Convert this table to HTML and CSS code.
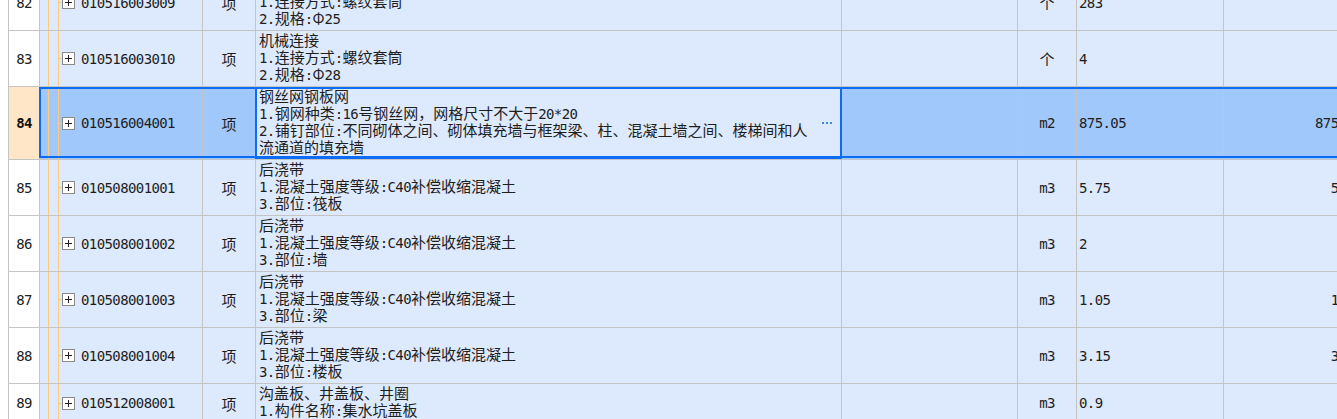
FILE: index.html
```html
<!DOCTYPE html>
<html lang="zh-CN">
<head>
<meta charset="utf-8">
<title>清单</title>
<link rel="stylesheet" href="styles.css">
</head>
<body>
<div class="sheet">
  <div class="grid">

    <div class="row">
      <div class="c num">82</div>
      <div class="c code"><span class="tick"></span><svg class="pb" width="13" height="13" viewBox="0 0 13 13"><rect x="0.5" y="0.5" width="12" height="12" fill="#fff" stroke="#8a8a8a"/><path d="M3 6.5H10M6.5 3V10" stroke="#222" fill="none"/></svg><span class="mono">010516003009</span></div>
      <div class="c unitx">项</div>
      <div class="c desc"><div class="ln">机械连接</div><div class="ln"><span class="n">1.</span>连接方式<span class="n">:</span>螺纹套筒</div><div class="ln"><span class="n">2.</span>规格<span class="n">:</span>Φ<span class="n">25</span></div></div>
      <div class="c blank"></div>
      <div class="c unit">个</div>
      <div class="c qty mono">283</div>
      <div class="c tot mono">283</div>
    </div>

    <div class="row">
      <div class="c num">83</div>
      <div class="c code"><span class="tick"></span><svg class="pb" width="13" height="13" viewBox="0 0 13 13"><rect x="0.5" y="0.5" width="12" height="12" fill="#fff" stroke="#8a8a8a"/><path d="M3 6.5H10M6.5 3V10" stroke="#222" fill="none"/></svg><span class="mono">010516003010</span></div>
      <div class="c unitx">项</div>
      <div class="c desc"><div class="ln">机械连接</div><div class="ln"><span class="n">1.</span>连接方式<span class="n">:</span>螺纹套筒</div><div class="ln"><span class="n">2.</span>规格<span class="n">:</span>Φ<span class="n">28</span></div></div>
      <div class="c blank"></div>
      <div class="c unit">个</div>
      <div class="c qty mono">4</div>
      <div class="c tot mono">4</div>
    </div>

    <div class="row sel">
      <div class="c num">84</div>
      <div class="c code"><span class="tick"></span><svg class="pb" width="13" height="13" viewBox="0 0 13 13"><rect x="0.5" y="0.5" width="12" height="12" fill="#fff" stroke="#8a8a8a"/><path d="M3 6.5H10M6.5 3V10" stroke="#222" fill="none"/></svg><span class="mono">010516004001</span></div>
      <div class="c unitx">项</div>
      <div class="c desc edit"><div class="ln">钢丝网钢板网</div><div class="ln"><span class="n">1.</span>钢网种类<span class="n">:16</span>号钢丝网，网格尺寸不大于<span class="n">20*20</span></div><div class="ln"><span class="n">2.</span>铺钉部位<span class="n">:</span>不同砌体之间、砌体填充墙与框架梁、柱、混凝土墙之间、楼梯间和人</div><div class="ln">流通道的填充墙</div><span class="more"><i></i><i></i><i></i></span></div>
      <div class="c blank"></div>
      <div class="c unit"><span class="mono">m2</span></div>
      <div class="c qty mono">875.05</div>
      <div class="c tot mono">875.05</div>
    </div>

    <div class="row">
      <div class="c num">85</div>
      <div class="c code"><span class="tick"></span><svg class="pb" width="13" height="13" viewBox="0 0 13 13"><rect x="0.5" y="0.5" width="12" height="12" fill="#fff" stroke="#8a8a8a"/><path d="M3 6.5H10M6.5 3V10" stroke="#222" fill="none"/></svg><span class="mono">010508001001</span></div>
      <div class="c unitx">项</div>
      <div class="c desc"><div class="ln">后浇带</div><div class="ln"><span class="n">1.</span>混凝土强度等级<span class="n">:C40</span>补偿收缩混凝土</div><div class="ln"><span class="n">3.</span>部位<span class="n">:</span>筏板</div></div>
      <div class="c blank"></div>
      <div class="c unit"><span class="mono">m3</span></div>
      <div class="c qty mono">5.75</div>
      <div class="c tot mono">5.75</div>
    </div>

    <div class="row">
      <div class="c num">86</div>
      <div class="c code"><span class="tick"></span><svg class="pb" width="13" height="13" viewBox="0 0 13 13"><rect x="0.5" y="0.5" width="12" height="12" fill="#fff" stroke="#8a8a8a"/><path d="M3 6.5H10M6.5 3V10" stroke="#222" fill="none"/></svg><span class="mono">010508001002</span></div>
      <div class="c unitx">项</div>
      <div class="c desc"><div class="ln">后浇带</div><div class="ln"><span class="n">1.</span>混凝土强度等级<span class="n">:C40</span>补偿收缩混凝土</div><div class="ln"><span class="n">3.</span>部位<span class="n">:</span>墙</div></div>
      <div class="c blank"></div>
      <div class="c unit"><span class="mono">m3</span></div>
      <div class="c qty mono">2</div>
      <div class="c tot mono">2</div>
    </div>

    <div class="row">
      <div class="c num">87</div>
      <div class="c code"><span class="tick"></span><svg class="pb" width="13" height="13" viewBox="0 0 13 13"><rect x="0.5" y="0.5" width="12" height="12" fill="#fff" stroke="#8a8a8a"/><path d="M3 6.5H10M6.5 3V10" stroke="#222" fill="none"/></svg><span class="mono">010508001003</span></div>
      <div class="c unitx">项</div>
      <div class="c desc"><div class="ln">后浇带</div><div class="ln"><span class="n">1.</span>混凝土强度等级<span class="n">:C40</span>补偿收缩混凝土</div><div class="ln"><span class="n">3.</span>部位<span class="n">:</span>梁</div></div>
      <div class="c blank"></div>
      <div class="c unit"><span class="mono">m3</span></div>
      <div class="c qty mono">1.05</div>
      <div class="c tot mono">1.05</div>
    </div>

    <div class="row">
      <div class="c num">88</div>
      <div class="c code"><span class="tick"></span><svg class="pb" width="13" height="13" viewBox="0 0 13 13"><rect x="0.5" y="0.5" width="12" height="12" fill="#fff" stroke="#8a8a8a"/><path d="M3 6.5H10M6.5 3V10" stroke="#222" fill="none"/></svg><span class="mono">010508001004</span></div>
      <div class="c unitx">项</div>
      <div class="c desc"><div class="ln">后浇带</div><div class="ln"><span class="n">1.</span>混凝土强度等级<span class="n">:C40</span>补偿收缩混凝土</div><div class="ln"><span class="n">3.</span>部位<span class="n">:</span>楼板</div></div>
      <div class="c blank"></div>
      <div class="c unit"><span class="mono">m3</span></div>
      <div class="c qty mono">3.15</div>
      <div class="c tot mono">3.15</div>
    </div>

    <div class="row">
      <div class="c num">89</div>
      <div class="c code"><span class="tick"></span><svg class="pb" width="13" height="13" viewBox="0 0 13 13"><rect x="0.5" y="0.5" width="12" height="12" fill="#fff" stroke="#8a8a8a"/><path d="M3 6.5H10M6.5 3V10" stroke="#222" fill="none"/></svg><span class="mono">010512008001</span></div>
      <div class="c unitx">项</div>
      <div class="c desc"><div class="ln">沟盖板、井盖板、井圈</div><div class="ln"><span class="n">1.</span>构件名称<span class="n">:</span>集水坑盖板</div></div>
      <div class="c blank"></div>
      <div class="c unit"><span class="mono">m3</span></div>
      <div class="c qty mono">0.9</div>
      <div class="c tot mono">0.9</div>
    </div>

  </div>
</div>
</body>
</html>
```

FILE: styles.css
```css
html, body {
  margin: 0;
  padding: 0;
  background: #ffffff;
  overflow: hidden;
}

body {
  font-family: "Noto Sans CJK SC", "Noto Sans", sans-serif;
  font-size: 15px;
  color: #1e1e1e;
}

.sheet {
  padding-left: 8px;
  height: 419px;
  overflow: hidden;
}

.grid {
  margin-top: -25px;
  width: max-content;
  border-left: 1px solid #c4c4c4;
}

.row {
  display: grid;
  grid-template-columns: 31px 163px 53px 586px 176px 59px 147px 142px;
  border-bottom: 1px solid #c4c4c4;
  background: #dde9fc;
  position: relative;
}

.c {
  box-sizing: border-box;
  border-right: 1px solid #c4c4c4;
  display: flex;
  align-items: center;
  min-width: 0;
  overflow: hidden;
  white-space: nowrap;
}

.num {
  background: #ffffff;
  justify-content: center;
  font-family: "DejaVu Sans Mono", monospace;
  font-size: 14px;
  letter-spacing: -0.6px;
  color: #222;
}

.code {
  padding-left: 19px;
  background:
    linear-gradient(#ffc97f, #ffc97f) 8px 0 / 1px 100% no-repeat,
    linear-gradient(#ffc97f, #ffc97f) 18px 0 / 1px 100% no-repeat;
}

.tick {
  width: 3px;
  height: 1px;
  background: #ffc97f;
  flex: none;
}

.pb {
  flex: none;
  display: block;
  margin-right: 6px;
}

.mono, .n {
  font-family: "DejaVu Sans Mono", monospace;
  font-size: 14px;
  letter-spacing: -0.6px;
}

.unitx {
  justify-content: center;
}

.desc {
  display: block;
  padding: 0 3px 4px;
}

.ln {
  height: 17px;
  line-height: 17px;
  white-space: nowrap;
}

.blank {
  background: transparent;
}

.unit {
  justify-content: center;
}

.qty {
  padding-left: 2px;
}

.tot {
  justify-content: flex-end;
  padding-right: 3px;
}

/* selected row */
.row.sel {
  background: #a0c8fb;
}

.row.sel .num {
  background: #fee6c7;
  font-weight: bold;
  color: #111;
}

.row.sel::after {
  content: "";
  position: absolute;
  left: 30px;
  top: 0;
  right: -20px;
  bottom: 1px;
  border: 2px solid #0b6cf8;
  pointer-events: none;
}

.desc.edit {
  background: #dde9fc;
  position: relative;
  overflow: visible;
}

.desc.edit::after {
  content: "";
  position: absolute;
  left: -1px;
  top: 0;
  right: -1px;
  bottom: 0;
  border: 2px solid #0b6cf8;
  z-index: 2;
  pointer-events: none;
}

.more {
  position: absolute;
  right: 9px;
  top: 35px;
  display: flex;
  gap: 2px;
}

.more i {
  display: block;
  width: 2px;
  height: 2px;
  background: #3f86d9;
}
```
